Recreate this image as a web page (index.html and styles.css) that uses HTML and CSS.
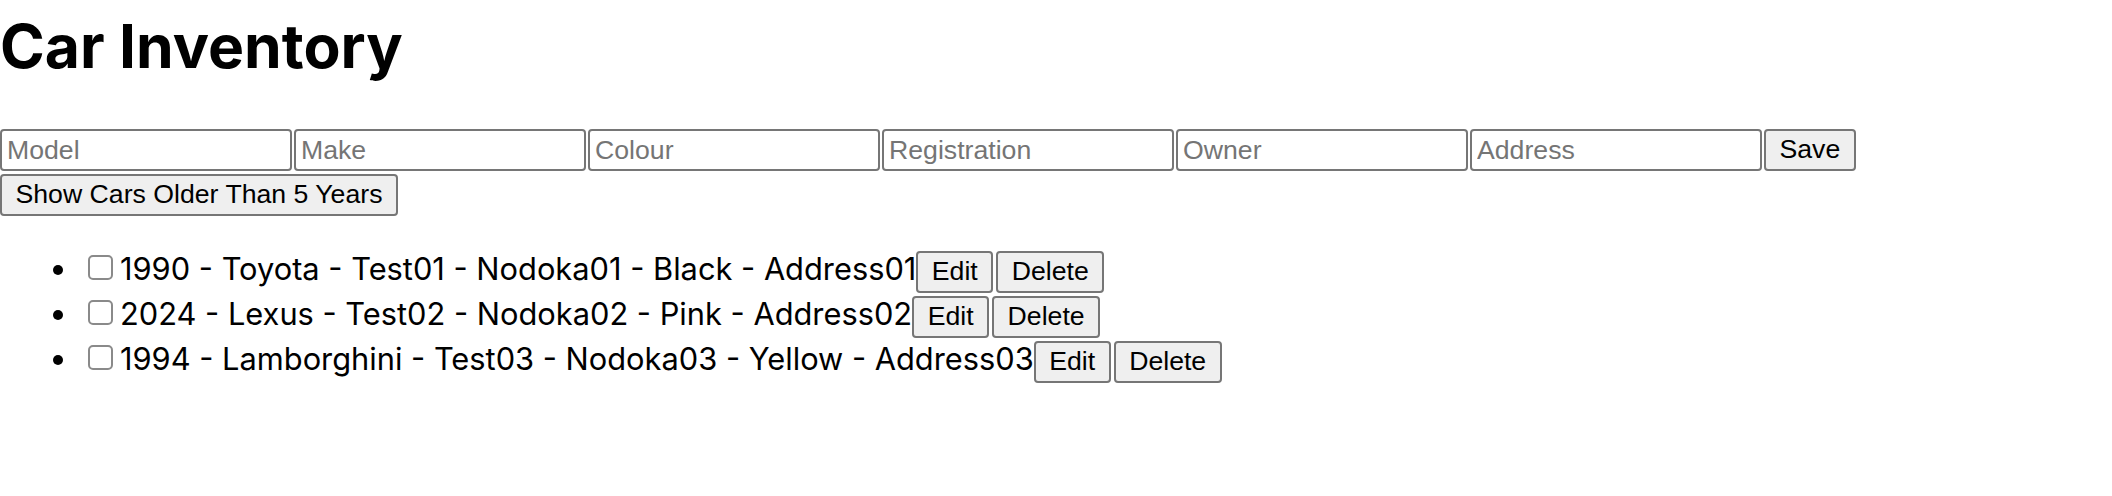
FILE: index.html
```html
<!DOCTYPE html>
<html lang="en">
<head>
<meta charset="utf-8">
<title>Car Inventory</title>
<link rel="stylesheet" href="styles.css">
</head>
<body>
<h1 class="title">Car Inventory</h1>
<form class="car-form">
  <div class="fields">
    <input class="field" type="text" placeholder="Model">
    <input class="field" type="text" placeholder="Make">
    <input class="field" type="text" placeholder="Colour">
    <input class="field" type="text" placeholder="Registration">
    <input class="field" type="text" placeholder="Owner">
    <input class="field" type="text" placeholder="Address">
    <button class="btn" type="button">Save</button>
  </div>
  <button class="btn btn-filter" type="button">Show Cars Older Than 5 Years</button>
</form>
<ul class="car-list">
  <li class="car"><input class="check" type="checkbox"><span class="car-text">1990 - Toyota - Test01 - Nodoka01 - Black - Address01</span><button class="btn" type="button">Edit</button><button class="btn" type="button">Delete</button></li>
  <li class="car"><input class="check" type="checkbox"><span class="car-text">2024 - Lexus - Test02 - Nodoka02 - Pink - Address02</span><button class="btn" type="button">Edit</button><button class="btn" type="button">Delete</button></li>
  <li class="car"><input class="check" type="checkbox"><span class="car-text">1994 - Lamborghini - Test03 - Nodoka03 - Yellow - Address03</span><button class="btn" type="button">Edit</button><button class="btn" type="button">Delete</button></li>
</ul>
</body>
</html>
```
FILE: styles.css
```css
html, body {
  background: #fff;
}
body {
  margin: 0;
  font-family: Inter, "Noto Sans", sans-serif;
  color: #000;
}
.title {
  margin: 0;
  padding-top: 14px;
  font-size: 60.6px;
  font-weight: 700;
  line-height: 64px;
}
.car-form {
  margin: 51px 0 0;
}
.fields {
  display: flex;
  gap: 2px;
}
.field {
  box-sizing: border-box;
  width: 292px;
  height: 42px;
  margin: 0;
  padding: 0 5px;
  border: 2px solid #767676;
  border-radius: 4px;
  background: #fff;
  font: 26.67px "Liberation Sans", Arial, sans-serif;
  color: #000;
}
.field::placeholder {
  color: #757575;
}
.btn {
  box-sizing: border-box;
  height: 42px;
  margin: 0;
  padding: 0 13.5px 1px;
  border: 2px solid #767676;
  border-radius: 4px;
  background: #efefef;
  font: 26.67px "Liberation Sans", Arial, sans-serif;
  color: #000;
  white-space: nowrap;
}
.btn-filter {
  display: block;
  margin-top: 3px;
}
.car-list {
  list-style: none;
  margin: 33px 0 0;
  padding: 0 0 0 53px;
}
.car {
  display: flex;
  align-items: flex-start;
  height: 45px;
}
.car::before {
  content: "";
  flex: none;
  width: 10px;
  height: 10px;
  margin: 16px 25px 0 0;
  border-radius: 50%;
  background: #000;
}
.check {
  appearance: none;
  flex: none;
  box-sizing: border-box;
  width: 25px;
  height: 25px;
  margin: 6px 7px 0 0;
  border: 2px solid #8a8a8a;
  border-radius: 5px;
  background: #fff;
}
.car-text {
  margin-top: -3px;
  font-size: 30.8px;
  line-height: 45px;
  white-space: nowrap;
}
.car .btn {
  margin-top: 2px;
}
.car .btn + .btn {
  margin-left: 3px;
}
```
